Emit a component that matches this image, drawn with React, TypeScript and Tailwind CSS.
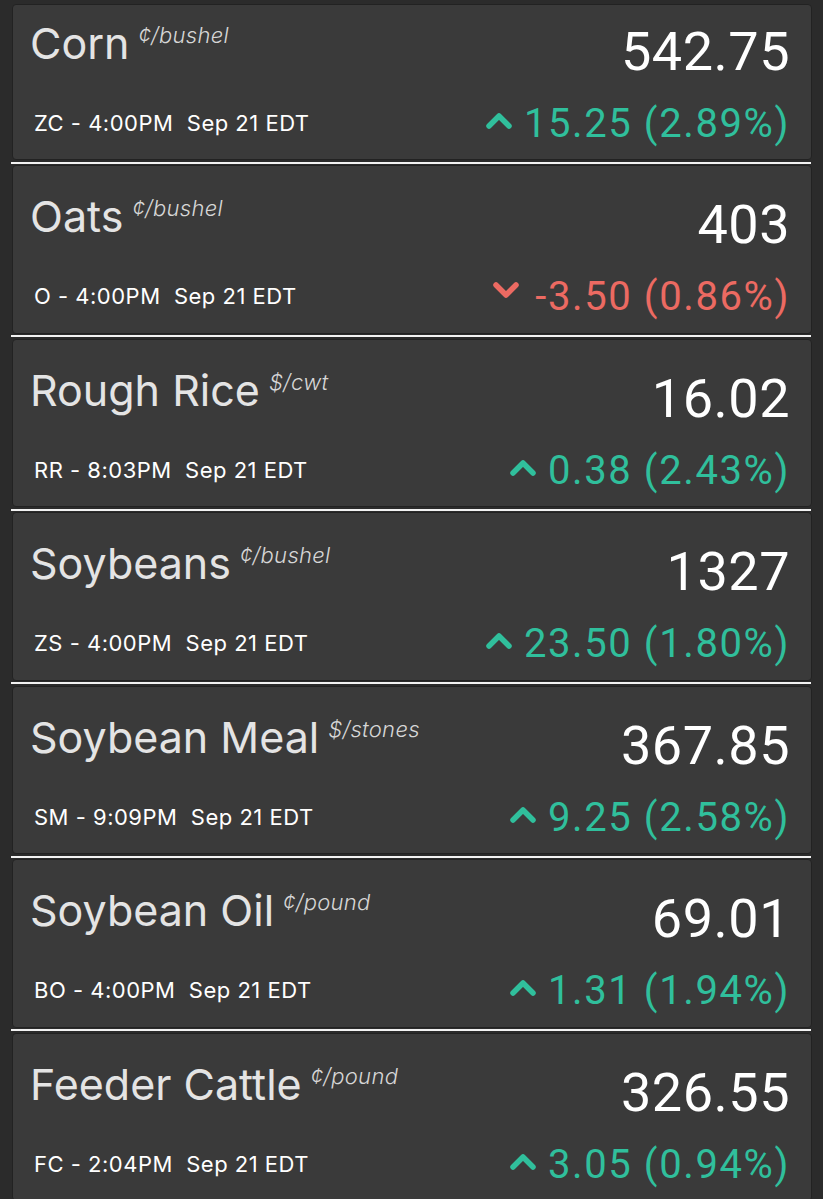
type Quote = {
  name: string;
  unit: string;
  price: string;
  symbol: string;
  time: string;
  change: string;
  pct: string;
  up: boolean;
};

const QUOTES: Quote[] = [
  { name: "Corn", unit: "¢/bushel", price: "542.75", symbol: "ZC", time: "4:00PM", change: "15.25", pct: "2.89%", up: true },
  { name: "Oats", unit: "¢/bushel", price: "403", symbol: "O", time: "4:00PM", change: "-3.50", pct: "0.86%", up: false },
  { name: "Rough Rice", unit: "$/cwt", price: "16.02", symbol: "RR", time: "8:03PM", change: "0.38", pct: "2.43%", up: true },
  { name: "Soybeans", unit: "¢/bushel", price: "1327", symbol: "ZS", time: "4:00PM", change: "23.50", pct: "1.80%", up: true },
  { name: "Soybean Meal", unit: "$/stones", price: "367.85", symbol: "SM", time: "9:09PM", change: "9.25", pct: "2.58%", up: true },
  { name: "Soybean Oil", unit: "¢/pound", price: "69.01", symbol: "BO", time: "4:00PM", change: "1.31", pct: "1.94%", up: true },
  { name: "Feeder Cattle", unit: "¢/pound", price: "326.55", symbol: "FC", time: "2:04PM", change: "3.05", pct: "0.94%", up: true },
];

function Caret({ up }: { up: boolean }) {
  return (
    <svg
      width="28"
      height="18"
      viewBox="0 0 28 18"
      className={up ? "mb-[8px] mr-[11px]" : "mb-[14px] mr-[15px]"}
    >
      <path
        d={up ? "M4 15 L14 5 L24 15" : "M4 4 L14 14 L24 4"}
        fill="none"
        stroke={up ? "#30bf9c" : "#ec6a62"}
        strokeWidth="5.5"
        strokeLinecap="round"
        strokeLinejoin="round"
      />
    </svg>
  );
}

function QuoteCard({ quote, first }: { quote: Quote; first?: boolean }) {
  return (
    <div
      className={`flex justify-between overflow-hidden rounded-[4px] border border-[#222] bg-[#3a3a3a] pl-[17px] pr-[21px] ${
        first ? "h-[156px]" : "h-[168.5px]"
      }`}
    >
      <div className={`flex flex-col ${first ? "pt-[17px]" : "pt-[29px]"}`}>
        <div className="flex items-start">
          <span className="font-['Inter'] text-[43px] leading-none text-[#e4e4e4]">
            {quote.name}
          </span>
          <span className="ml-[9px] mt-[2px] font-['Inter'] text-[22px] italic font-light leading-none tracking-[0.3px] text-[#d6d6d6]">
            {quote.unit}
          </span>
        </div>
        <div className="mt-[47px] whitespace-pre pl-[4px] font-['Inter'] text-[22px] leading-none tracking-[0.5px] text-white">
          {`${quote.symbol} - ${quote.time}  Sep 21 EDT`}
        </div>
      </div>

      <div className={`flex flex-col items-end ${first ? "pt-[20px]" : "pt-[32px]"}`}>
        <div className="font-['Roboto'] text-[54px] leading-none tracking-[0.5px] text-white">
          {quote.price}
        </div>
        <div
          className={`mt-[25px] flex items-center font-['Roboto'] text-[40px] leading-none tracking-[1.6px] ${
            quote.up ? "text-[#30bf9c]" : "text-[#ec6a62]"
          }`}
        >
          <Caret up={quote.up} />
          <span>
            {quote.change} ({quote.pct})
          </span>
        </div>
      </div>
    </div>
  );
}

export default function App() {
  return (
    <div className="h-[1199px] overflow-hidden bg-[#2b2b2b] pl-[12px] pr-[11px] pt-[4px]">
      {QUOTES.map((quote, i) => (
        <div key={quote.symbol}>
          {i > 0 && (
            <div className="flex h-[5px] items-center">
              <div className="-mx-[1px] h-[2px] w-full bg-[#f2f2f2]" />
            </div>
          )}
          <QuoteCard quote={quote} first={i === 0} />
        </div>
      ))}
    </div>
  );
}
